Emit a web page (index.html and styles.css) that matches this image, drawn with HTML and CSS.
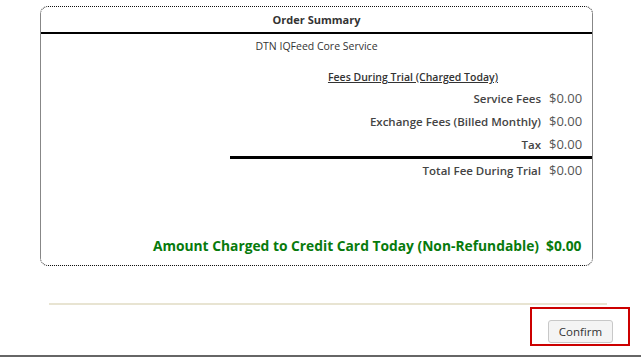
FILE: index.html
```html
<!DOCTYPE html>
<html lang="en">
  <head>
    <meta charset="utf-8">
    <title>Order Summary</title>
    <link rel="stylesheet" href="styles.css">
  </head>
  <body>
    <div class="summary">
      <div class="summary-title">Order Summary</div>
      <div class="service">DTN IQFeed Core Service</div>
      <div class="fees">
        <div class="fees-heading">Fees During Trial (Charged Today)</div>
        <div class="fee-row">
          <span class="label">Service Fees</span>
          <span class="value">$0.00</span>
        </div>
        <div class="fee-row">
          <span class="label">Exchange Fees (Billed Monthly)</span>
          <span class="value">$0.00</span>
        </div>
        <div class="fee-row">
          <span class="label">Tax</span>
          <span class="value">$0.00</span>
        </div>
        <div class="total-line"></div>
        <div class="fee-row">
          <span class="label">Total Fee During Trial</span>
          <span class="value">$0.00</span>
        </div>
      </div>
      <div class="charged">
        <span class="label">Amount Charged to Credit Card Today (Non-Refundable)</span>
        <span class="value">$0.00</span>
      </div>
    </div>
    <div class="divider"></div>
    <div class="actions">
      <div class="highlight">
        <button class="confirm" type="button">Confirm</button>
      </div>
    </div>
    <div class="footer"></div>
  </body>
</html>
```

FILE: styles.css
```css
body{
  margin: 0;
  background-color: #fff;
  color: #333;
  font-family: "Open Sans", "Noto Sans", sans-serif;
}
.summary{
  margin: 6px 0 0 40px;
  width: 551px;
  height: 258px;
  border: 1px dotted #111;
  border-radius: 8px;
  display: flex;
  flex-direction: column;
}
.summary-title{
  height: 25px;
  line-height: 25px;
  text-align: center;
  font-size: 11px;
  font-weight: 700;
  color: #333;
  border-bottom: 2px solid #000;
}
.service{
  margin-top: 4px;
  line-height: 16px;
  text-align: center;
  font-size: 10.5px;
  color: #333;
}
.fees{
  margin-top: 15px;
}
.fees-heading{
  line-height: 16px;
  text-align: right;
  padding-right: 94px;
  font-size: 10.5px;
  font-weight: 600;
  text-decoration: underline;
  color: #333;
  margin-bottom: 2px;
}
.fee-row{
  display: grid;
  grid-template-columns: 1fr 43px;
  column-gap: 8px;
  height: 23px;
  line-height: 23px;
}
.label{
  text-align: right;
  font-size: 11.5px;
  font-weight: 600;
  color: #444;
}
.value{
  font-size: 13px;
  color: #555;
}
.total-line{
  margin-left: 189px;
  height: 3px;
  background-color: #000;
}
.charged{
  margin-top: auto;
  margin-bottom: 9px;
  display: grid;
  grid-template-columns: 1fr 46px;
  column-gap: 7px;
  line-height: 20px;
}
.charged .label,
.charged .value{
  font-size: 13.8px;
  font-weight: 700;
  color: #077a0c;
}
.divider{
  margin: 37px 0 0 49px;
  width: 558px;
  height: 2px;
  background-color: #e8e4d2;
}
.actions{
  display: flex;
  justify-content: flex-end;
  padding-right: 11px;
  margin-top: 2px;
}
.highlight{
  border: 2px solid #cc0000;
  padding: 10px 15px 1px 16px;
}
.confirm{
  width: 65px;
  height: 23px;
  padding: 0;
  background-color: #f4f4f4;
  border: 1px solid #c8c8c8;
  border-radius: 3px;
  font-family: "Open Sans", "Noto Sans", sans-serif;
  font-size: 11.5px;
  color: #333;
}
.footer{
  margin-top: 9px;
  border-top: 2px solid #666;
}
```
